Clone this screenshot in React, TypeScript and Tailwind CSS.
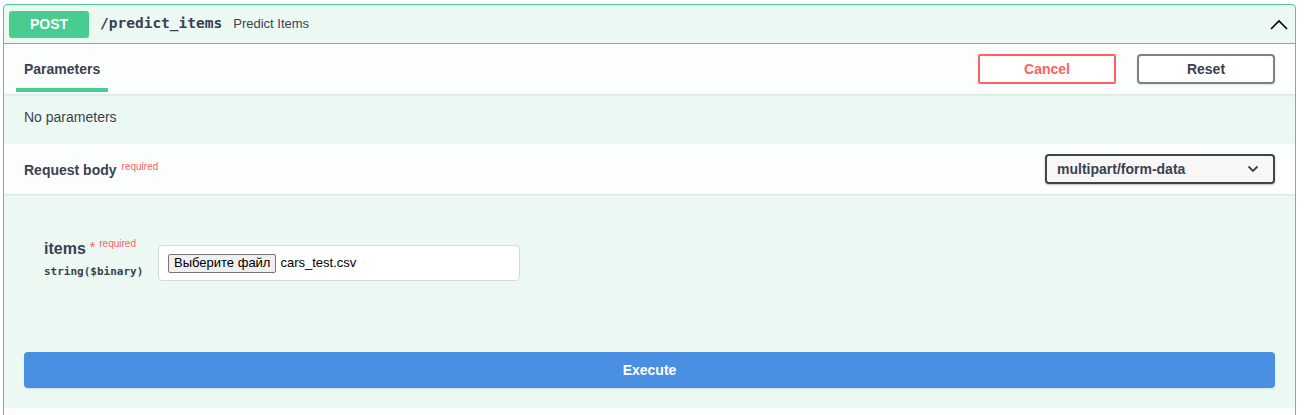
import { useState } from 'react'

const SANS = 'font-["Liberation_Sans",Arial,sans-serif]'
const MONO = 'font-["DejaVu_Sans_Mono",monospace]'

function ChevronUp() {
  return (
    <svg width="20" height="20" viewBox="0 0 20 20" className="text-black">
      <path d="M2 15 L10 7 L18 15" fill="none" stroke="currentColor" strokeWidth="1.6" />
    </svg>
  )
}

function ChevronDown() {
  return (
    <svg width="12" height="8" viewBox="0 0 12 8" className="text-[#3b4151]">
      <path d="M1.5 1.5 L6 6 L10.5 1.5" fill="none" stroke="currentColor" strokeWidth="1.8" />
    </svg>
  )
}

export default function App() {
  const [open, setOpen] = useState(true)

  return (
    <main className={`min-h-screen bg-white pt-[4px] pl-[3px] text-[#3b4151] ${SANS}`}>
      <div className="w-[1293px] rounded border border-[#49cc90] bg-[#ecf9f3] overflow-hidden">
        {/* summary */}
        <div
          className="flex h-[39px] items-center border-b border-[#49cc90] pl-[5px] pr-[6px] cursor-pointer"
          onClick={() => setOpen((o) => !o)}
        >
          <span className="flex h-[27px] w-[80px] items-center justify-center rounded-[3px] bg-[#49cc90] text-[14px] font-bold text-white">
            POST
          </span>
          <span className={`ml-[11px] text-[14.5px] font-bold ${MONO}`}>/predict_items</span>
          <span className="ml-[11px] text-[13px]">Predict Items</span>
          <span className="ml-auto">
            <ChevronUp />
          </span>
        </div>

        {open && (
          <>
            {/* parameters tab header */}
            <div className="flex h-[50px] items-stretch bg-white/80 pl-[12px] pr-[20px] shadow-[0_1px_2px_rgba(0,0,0,0.1)]">
              <div className="flex flex-col">
                <div className="px-[8px] pt-[17px] text-[14px] font-bold leading-[16px]">Parameters</div>
                <div className="mt-[11px] h-[4px] w-[92px] bg-[#49cc90]" />
              </div>
              <div className="ml-auto flex items-center gap-[21px]">
                <button className="h-[30px] w-[138px] rounded-[2px] border-2 border-[#ff6060] bg-white text-[14px] font-bold text-[#ff6060]">
                  Cancel
                </button>
                <button className="h-[30px] w-[138px] rounded-[4px] border-2 border-[#808080] bg-white text-[14px] font-bold text-[#3b4151] shadow-[0_1px_2px_rgba(0,0,0,0.1)]">
                  Reset
                </button>
              </div>
            </div>

            <div className="flex h-[50px] items-center px-[20px] pb-[3px] text-[14px]">No parameters</div>

            {/* request body header */}
            <div className="flex h-[50px] items-center bg-white/80 pl-[20px] pr-[20px] pt-[2px] shadow-[0_1px_2px_rgba(0,0,0,0.1)]">
              <span className="text-[14px] font-bold">Request body</span>
              <span className="ml-[5px] -translate-y-[4px] text-[10px] text-[#ff6060]">required</span>
              <div className="ml-auto -mt-[2px] flex h-[30px] w-[230px] items-center rounded-[4px] border-2 border-[#41444e] bg-[#f7f7f7] pl-[10px] pr-[14px] shadow-[0_1px_2px_rgba(0,0,0,0.25)]">
                <span className="text-[14px] font-bold">multipart/form-data</span>
                <span className="ml-auto">
                  <ChevronDown />
                </span>
              </div>
            </div>

            {/* body */}
            <div className="px-[20px] pb-[20px] pt-[50px]">
              <div className="flex items-start pl-[20px]">
                <div className="-mt-[4px] w-[114px]">
                  <div className="flex items-start">
                    <span className="text-[16px] font-bold leading-[18px]">items</span>
                    <span className="ml-[4px] text-[14px] leading-[14px] text-[#ff6060]">*</span>
                    <span className="ml-[4px] -translate-y-[4px] text-[10px] text-[#ff6060]">required</span>
                  </div>
                  <div className={`mt-[6px] text-[11px] font-semibold ${MONO}`}>string($binary)</div>
                </div>
                <div className="mt-[1px] flex h-[36px] w-[362px] items-center rounded-[4px] border border-[#d9d9d9] bg-white px-[9px]">
                  <span className="flex h-[19px] items-center rounded-[2px] border border-[#767676] bg-[#efefef] px-[5px] text-[13px] text-black">
                    Выберите файл
                  </span>
                  <span className="ml-[4px] text-[13px] text-black">cars_test.csv</span>
                </div>
              </div>

              <button className="mt-[71px] h-[36px] w-full rounded-[4px] bg-[#4990e2] text-[14px] font-bold text-white shadow-[0_1px_2px_rgba(0,0,0,0.1)]">
                Execute
              </button>
            </div>

            <div className="h-[30px] bg-white/80" />
          </>
        )}
      </div>
    </main>
  )
}
